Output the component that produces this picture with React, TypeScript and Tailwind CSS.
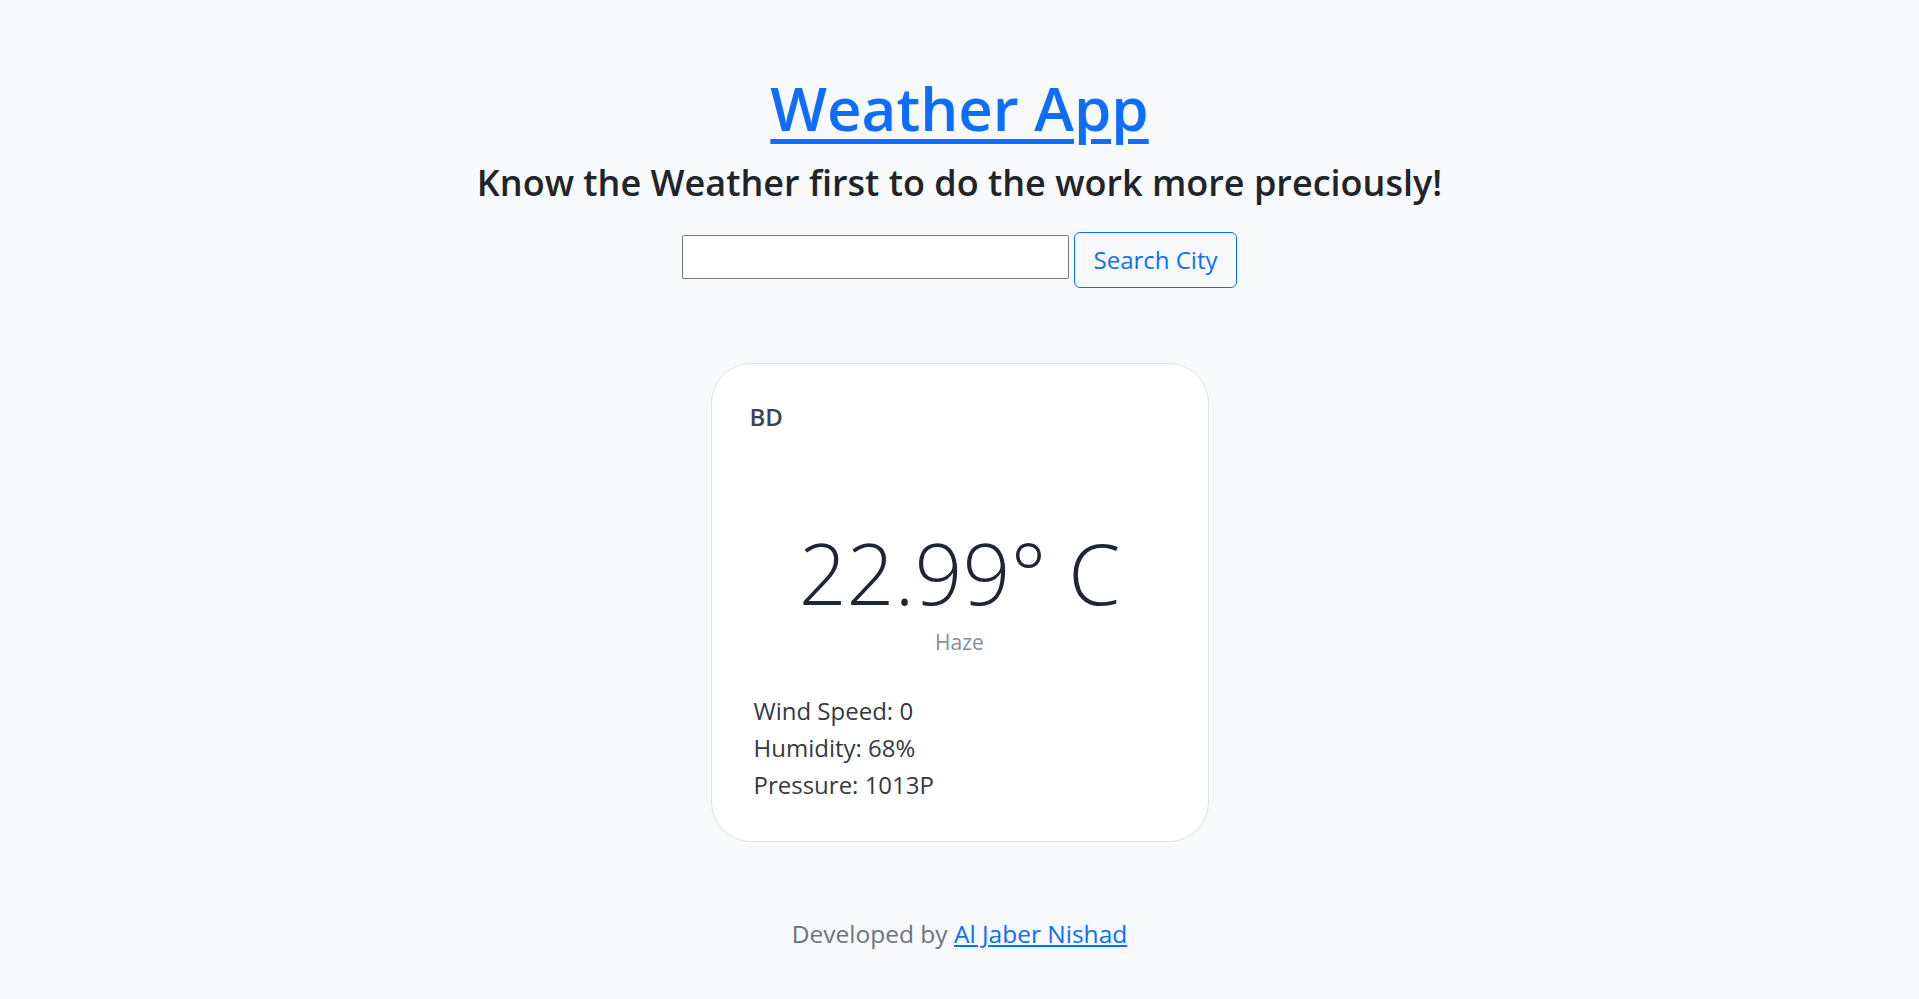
import React from "react";

export default function App() {
  const font = { fontFamily: '"Open Sans", "Noto Sans", sans-serif' };
  return (
    <div
      className="min-h-screen w-full bg-[#f8f9fa] flex flex-col items-center pt-[72px]"
      style={font}
    >
      <h1 className="text-[60px] leading-[1.2] font-semibold">
        <a href="#" className="text-[#0d6efd] underline decoration-[5px] underline-offset-[8px]">
          Weather App
        </a>
      </h1>
      <h2 className="mt-[17px] text-[36px] leading-[1.2] font-semibold text-[#212529]">
        Know the Weather first to do the work more preciously!
      </h2>
      <div className="mt-[22px] flex items-center gap-[5px]">
        <input
          type="text"
          className="w-[387px] h-[44px] bg-white border border-[#767676] rounded-[2px] outline-none px-2"
        />
        <button className="mt-[6px] h-[56px] px-[19px] border border-[#0d6efd] rounded-[6px] text-[#0d6efd] text-[24px]">
          Search City
        </button>
      </div>
      <div className="mt-[75px] w-[498px] h-[479px] bg-white border border-[#dee2e6] rounded-[40px] flex flex-col">
        <div className="pl-[38px] pt-[35px] text-[24px] font-semibold text-[#3d4451]">BD</div>
        <div className="mt-[88px] text-center text-[84px] leading-[1.2] font-light text-[#1e2533]">
          22.99° C
        </div>
        <div className="mt-[6px] text-center text-[21px] leading-[1.2] text-[#868e96]">Haze</div>
        <div className="mt-[37px] pl-[42px] text-[24px] leading-[37px] text-[#343a40]">
          <div>Wind Speed: 0</div>
          <div>Humidity: 68%</div>
          <div>Pressure: 1013P</div>
        </div>
      </div>
      <p className="mt-[74px] text-[24.5px] text-[#6c757d]">
        Developed by{" "}
        <a href="#" className="text-[#0d6efd] underline">
          Al Jaber Nishad
        </a>
      </p>
    </div>
  );
}
